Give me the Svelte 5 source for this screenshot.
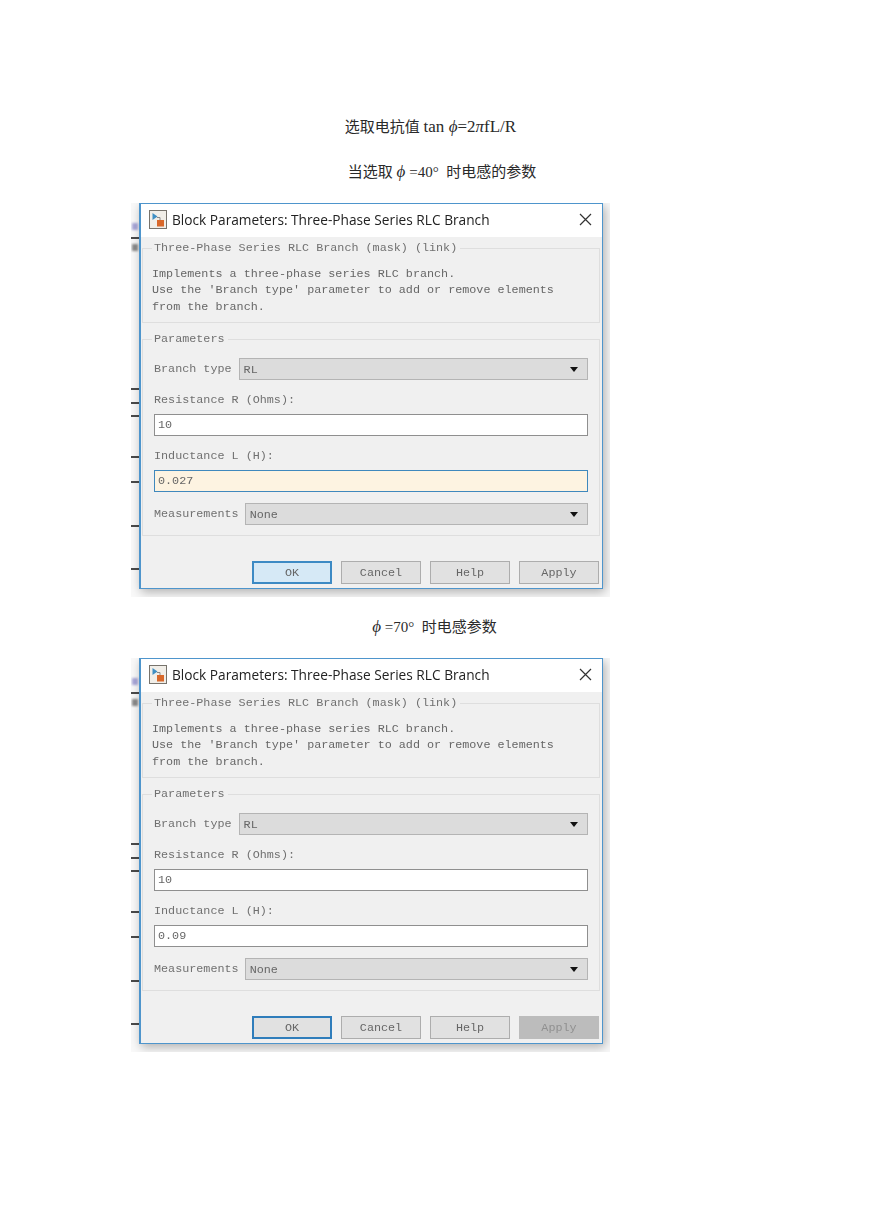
<script>
  const wires = [34, 185, 199, 212, 253, 278, 322, 365];

  const dialogs = [
    { inductance: '0.027', focused: true, applyOff: false },
    { inductance: '0.09', focused: false, applyOff: true }
  ];
</script>

<main class="page">
  <p class="cap first">选取电抗值 <span class="math">tan <i>ϕ</i>=2<i>π</i>fL/R</span></p>
  <p class="cap second">当选取 <i class="phi">ϕ</i> =40°&nbsp; 时电感的参数</p>

  {#each dialogs as d, i}
    {#if i === 1}
      <p class="cap third"><i class="phi">ϕ</i> =70°&nbsp; 时电感参数</p>
    {/if}

    <section class="shot">
      {#each wires as y}
        <span class="wire" style="top: {y}px"></span>
      {/each}
      <span class="blot"></span>
      <span class="blot grey"></span>

      <div class="dialog">
        <header class="titlebar">
          <svg width="18" height="19" viewBox="0 0 18 19">
            <rect x="0.5" y="0.5" width="17" height="18" fill="#f1eee8" stroke="#77736c" />
            <path d="M3.5 3v7l5-3.5z" fill="#3f8fc4" />
            <path d="M8 7.5h3v3" fill="none" stroke="#888" />
            <rect x="8" y="10" width="7" height="6.5" fill="#d9682a" />
          </svg>
          <span class="title">Block Parameters: Three-Phase Series RLC Branch</span>
          <svg class="close" width="13" height="13" viewBox="0 0 13 13">
            <path d="M1 1l11 11M12 1L1 12" stroke="#333" stroke-width="1.2" fill="none" />
          </svg>
        </header>

        <div class="body">
          <fieldset class="mask">
            <legend>Three-Phase Series RLC Branch (mask) (link)</legend>
            <div class="desc">Implements a three-phase series RLC branch.</div>
            <div class="desc">Use the 'Branch type' parameter to add or remove elements</div>
            <div class="desc">from the branch.</div>
          </fieldset>

          <fieldset class="params">
            <legend>Parameters</legend>

            <div class="row">
              <span class="lbl">Branch type</span>
              <div class="select branch">RL<span class="arrow"></span></div>
            </div>

            <div class="lbl stacked">Resistance R (Ohms):</div>
            <div class="input">10</div>

            <div class="lbl stacked">Inductance L (H):</div>
            <div class="input" class:focused={d.focused}>{d.inductance}</div>

            <div class="row meas">
              <span class="lbl">Measurements</span>
              <div class="select">None<span class="arrow"></span></div>
            </div>
          </fieldset>

          <footer class="buttons">
            <button class="ok" class:idle={!d.focused}>OK</button>
            <button>Cancel</button>
            <button>Help</button>
            <button class:off={d.applyOff}>Apply</button>
          </footer>
        </div>
      </div>
    </section>
  {/each}
</main>

<style>
  :global(body) {
    margin: 0;
    background: #fff;
  }

  .page {
    width: 869px;
    height: 1228px;
    padding-top: 117px;
    box-sizing: border-box;
    overflow: hidden;
  }

  .cap {
    margin: 0;
    height: 20px;
    line-height: 20px;
    font-family: "Liberation Serif", "Noto Sans CJK SC", serif;
    font-size: 15px;
    color: #2a2a2a;
    text-align: center;
  }

  .cap i {
    font-family: "Liberation Serif", serif;
  }

  .cap .phi {
    font-size: 17px;
  }

  .math {
    font-size: 17px;
  }

  .first {
    padding-right: 8px;
  }

  .second {
    margin-top: 25px;
    padding-left: 15px;
  }

  .third {
    margin-top: 20px;
    margin-bottom: 21px;
  }

  .shot {
    position: relative;
    width: 479px;
    height: 394px;
    margin-top: 21px;
    margin-left: 131px;
    background: #f9f9f9;
    overflow: hidden;
    filter: blur(0.3px);
  }

  .third + .shot {
    margin-top: 0;
  }

  .wire {
    position: absolute;
    left: 0;
    width: 8px;
    height: 1.5px;
    background: #4a4a4a;
  }

  .blot {
    position: absolute;
    left: 1px;
    top: 20px;
    width: 6px;
    height: 7px;
    background: #a9a7d8;
    filter: blur(1px);
  }

  .blot.grey {
    top: 41px;
    background: #8a8a8a;
  }

  .dialog {
    position: absolute;
    left: 8px;
    top: 0;
    width: 464px;
    height: 386px;
    box-sizing: border-box;
    border: 1px solid #4e95cc;
    border-left-width: 2px;
    background: #f0f0f0;
    box-shadow: 2px 3px 10px rgba(0, 0, 0, 0.3);
    display: flex;
    flex-direction: column;
  }

  .titlebar {
    height: 33px;
    flex: none;
    box-sizing: border-box;
    background: #fff;
    display: flex;
    align-items: center;
    padding: 0 10px 2px 8px;
    gap: 5px;
  }

  .title {
    font-family: "Open Sans", sans-serif;
    font-size: 13.7px;
    color: #222;
    white-space: nowrap;
  }

  .close {
    margin-left: auto;
  }

  .body {
    flex: 1;
    position: relative;
    padding: 0 2px 0 1px;
    font-family: "Liberation Mono", "DejaVu Sans Mono", monospace;
    font-size: 11.75px;
    color: #666;
  }

  fieldset {
    margin: 0;
    min-width: 0;
    border: 1px solid #dedede;
    box-sizing: border-box;
  }

  legend {
    padding: 0 3px 0 2px;
    line-height: 16px;
    color: #707070;
  }

  .mask {
    height: 83px;
    margin-top: 3px;
    padding: 9.5px 9px 0;
  }

  .desc {
    height: 16.5px;
    line-height: 16.5px;
    white-space: pre;
  }

  .params {
    height: 205px;
    margin-top: 8px;
    padding: 11px 11px 0;
  }

  .params legend {
    margin-left: -2px;
  }

  .row {
    display: flex;
    align-items: center;
    height: 22px;
    gap: 6px;
  }

  .lbl {
    white-space: nowrap;
    color: #707070;
  }

  .stacked {
    height: 16px;
    line-height: 16px;
    margin: 12px 0 6px;
  }

  .select {
    flex: 1;
    height: 22px;
    line-height: 22px;
    box-sizing: border-box;
    padding-left: 4px;
    background: #dcdcdc;
    border: 1px solid #b4b4b4;
    position: relative;
  }

  .branch {
    margin-left: 1px;
  }

  .arrow {
    position: absolute;
    right: 9px;
    top: 8px;
    border: 4px solid transparent;
    border-top: 5px solid #111;
    border-bottom: 0;
  }

  .meas {
    margin-top: 11px;
  }

  .input {
    height: 22px;
    line-height: 20px;
    box-sizing: border-box;
    padding-left: 3px;
    background: #fff;
    border: 1px solid #8f8f8f;
  }

  .input.focused {
    background: #fdf3e1;
    border-color: #3f88bd;
  }

  .buttons {
    position: absolute;
    left: 111px;
    top: 324px;
    display: flex;
    gap: 9px;
  }

  button {
    width: 80px;
    height: 23px;
    padding: 0;
    box-sizing: border-box;
    font: inherit;
    color: #666;
    background: #e1e1e1;
    border: 1px solid #adadad;
  }

  .ok {
    background: #d6e9f6;
    border: 2px solid #3d8ac4;
  }

  .ok.idle {
    background: #e1e1e1;
    border-color: #2f7dbb;
  }

  .off {
    background: #bcbcbc;
    border-color: #bcbcbc;
    color: #909090;
  }
</style>
